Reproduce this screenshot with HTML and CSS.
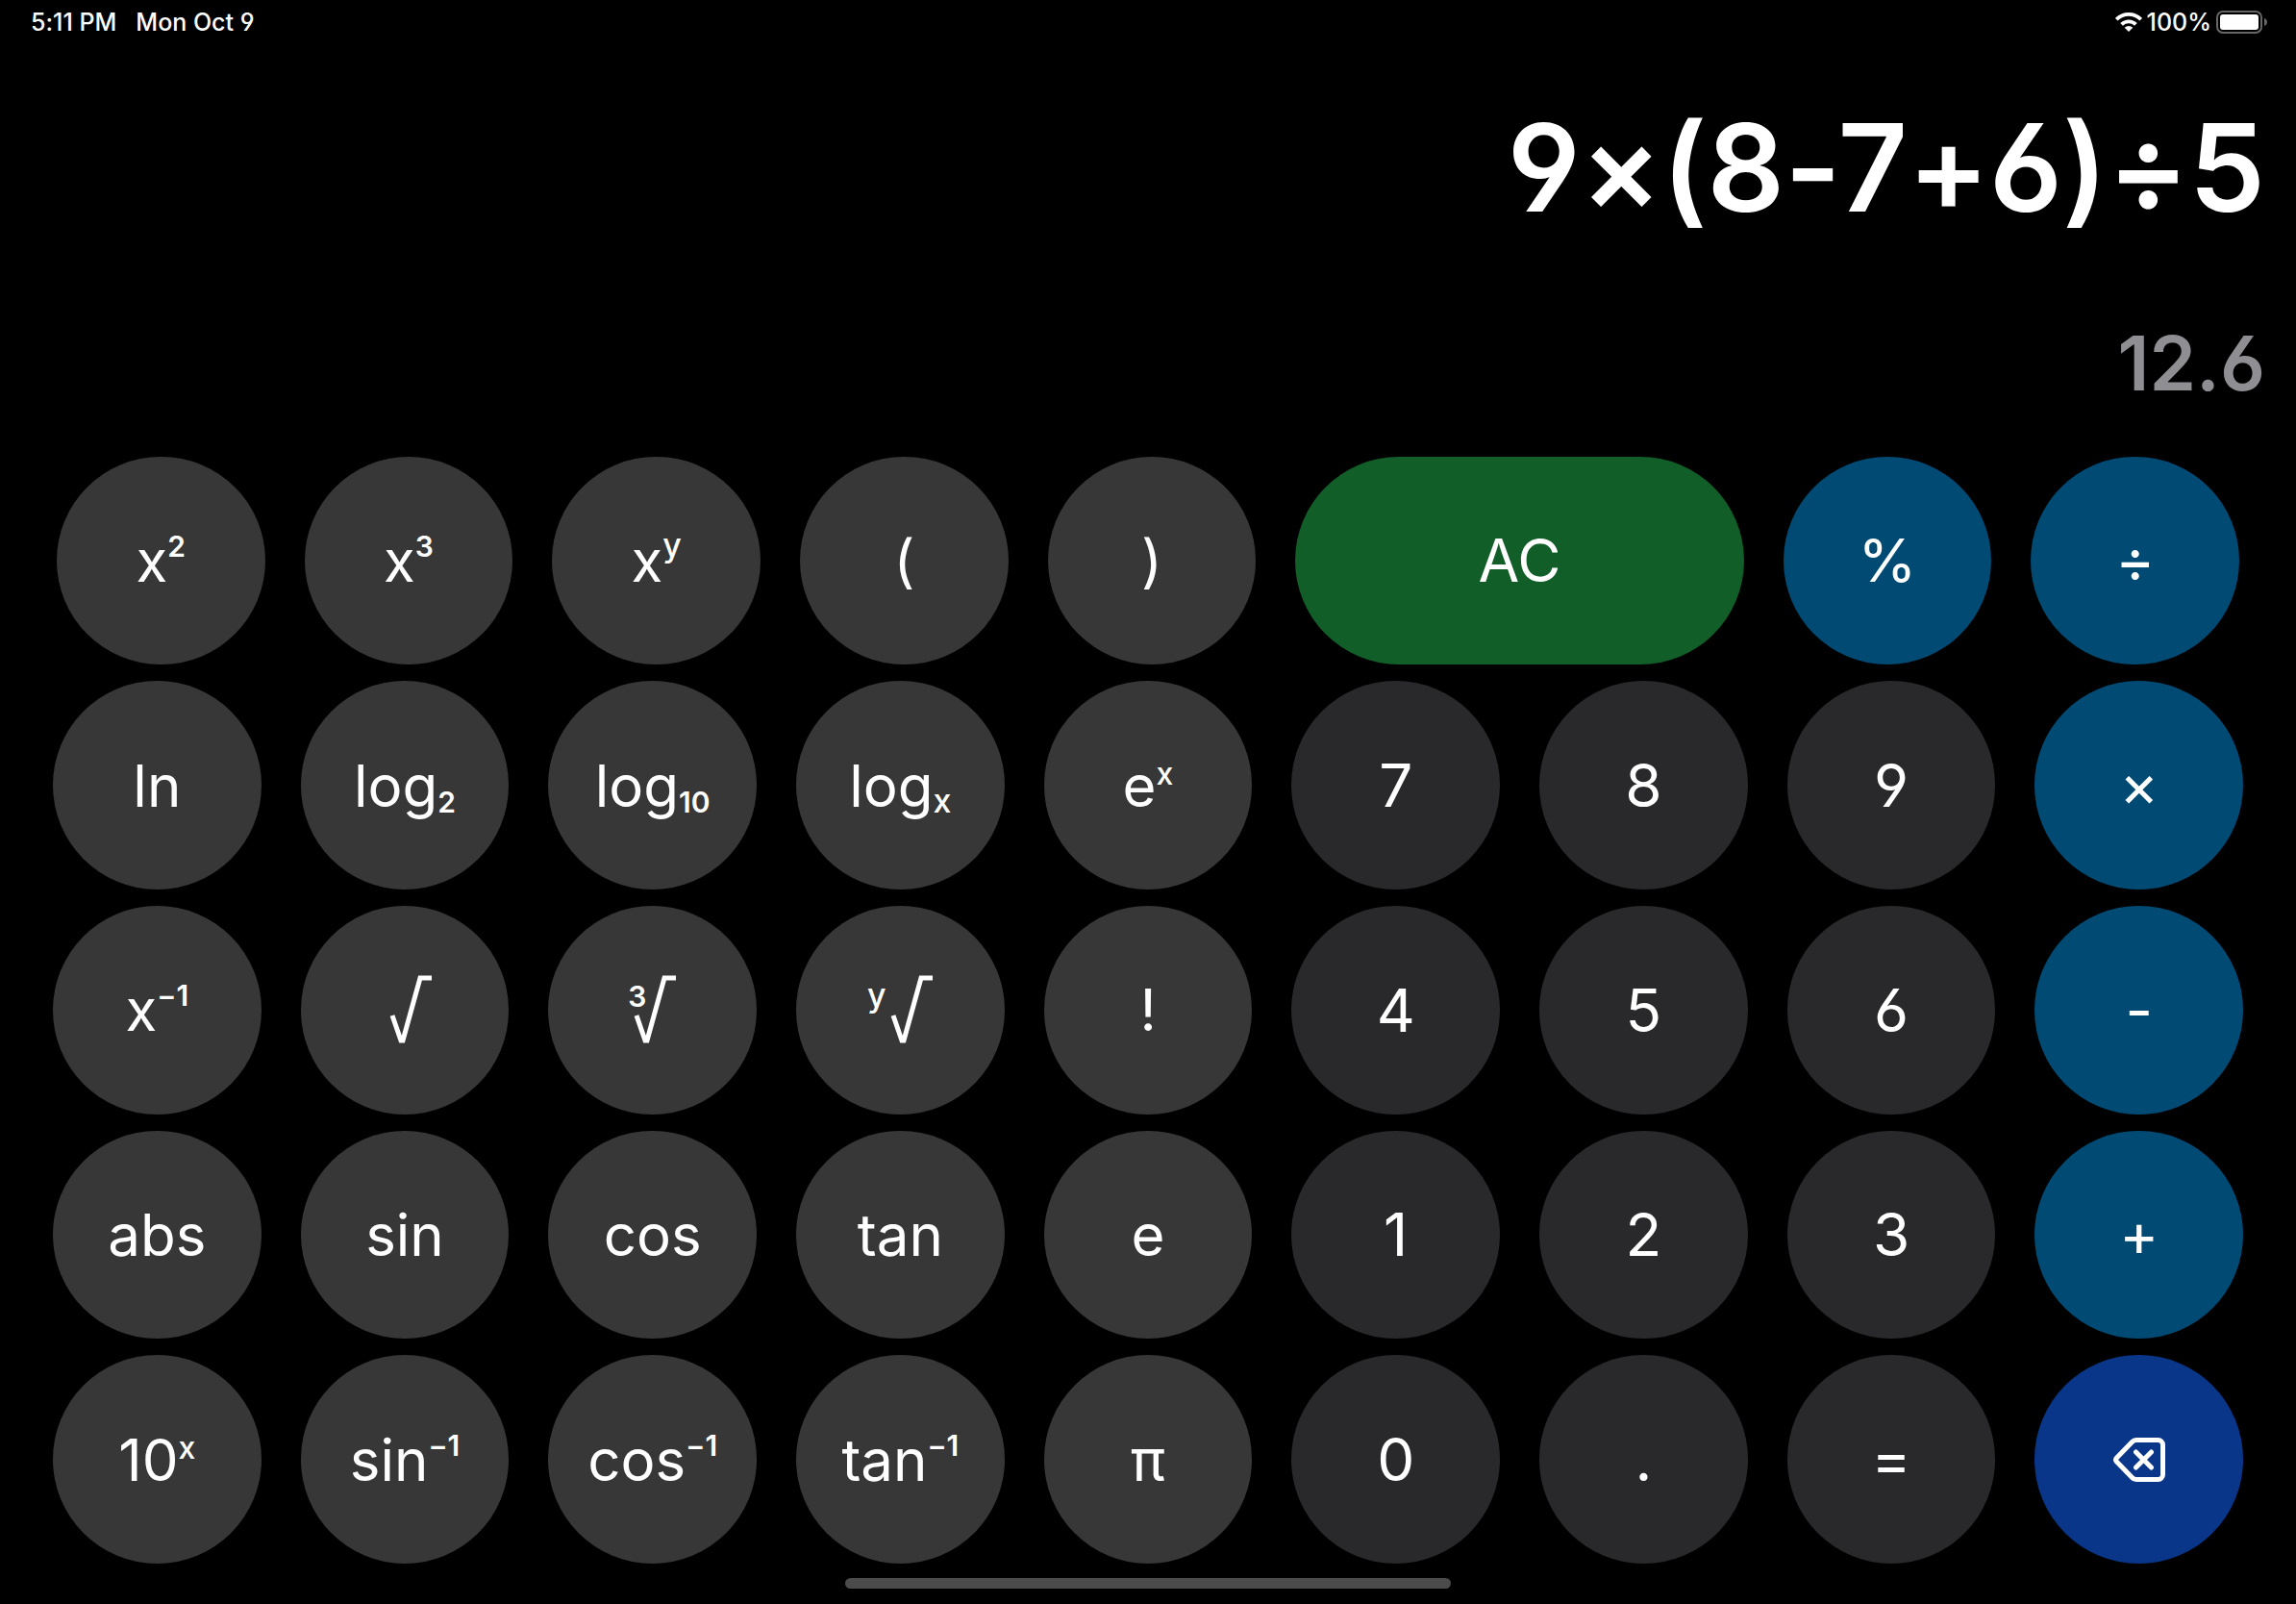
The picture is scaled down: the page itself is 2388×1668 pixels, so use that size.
FILE: index.html
```html
<!DOCTYPE html>
<html lang="en">
<head>
<meta charset="utf-8">
<meta name="viewport" content="width=device-width, initial-scale=1">
<title>Calculator</title>
<link rel="stylesheet" href="styles.css">
</head>
<body>
<div class="app">
  <header class="status">
    <div class="status-group status-left">
      <time>5:11 PM</time>
      <time>Mon Oct 9</time>
    </div>
    <div class="status-group status-right">
      <svg class="wifi" viewBox="0 0 28 20" aria-hidden="true">
        <path fill="#fff" d="M14 20l4.300-4.300a6.200 6.200 0 0 0-8.600 0z"/>
        <path fill="none" stroke="#fff" stroke-width="3.800" d="M6.600 12.400a10.600 10.600 0 0 1 14.800 0M1.300 7.200a18 18 0 0 1 25.400 0"/>
      </svg>
      <span>100%</span>
      <svg class="battery" viewBox="0 0 54 24" aria-hidden="true">
        <rect x="1" y="1" width="46" height="22" rx="6" fill="none" stroke="#666" stroke-width="2"/>
        <rect x="4" y="4" width="40" height="16" rx="3" fill="#fff"/>
        <path fill="#666" d="M50 8c2 .6 3 2.200 3 4s-1 3.400-3 4z"/>
      </svg>
    </div>
  </header>

  <section class="display">
    <output class="expression">9×(8-7+6)÷5</output>
    <output class="result">12.6</output>
  </section>

  <main class="keypad">
    <div class="row row-top">
      <button class="key">x<sup>2</sup></button>
      <button class="key">x<sup>3</sup></button>
      <button class="key">x<sup class="variable">y</sup></button>
      <button class="key">(</button>
      <button class="key">)</button>
      <button class="key clear">AC</button>
      <button class="key operator">%</button>
      <button class="key operator">÷</button>
    </div>
    <div class="row">
      <button class="key">ln</button>
      <button class="key">log<sub>2</sub></button>
      <button class="key">log<sub>10</sub></button>
      <button class="key">log<sub class="variable">x</sub></button>
      <button class="key">e<sup class="exponent">x</sup></button>
      <button class="key digit">7</button>
      <button class="key digit">8</button>
      <button class="key digit">9</button>
      <button class="key operator">×</button>
    </div>
    <div class="row">
      <button class="key">x<sup>−1</sup></button>
      <button class="key" aria-label="Square root"><svg class="radical" viewBox="0 0 46 72" aria-hidden="true"><path d="M4 43L13 69H15L33 4H45"/></svg></button>
      <button class="key" aria-label="Cube root"><sup>3</sup><svg class="radical radical-tucked" viewBox="0 0 46 72" aria-hidden="true"><path d="M4 43L13 69H15L33 4H45"/></svg></button>
      <button class="key" aria-label="y-th root"><sup class="variable">y</sup><svg class="radical radical-beside" viewBox="0 0 46 72" aria-hidden="true"><path d="M4 43L13 69H15L33 4H45"/></svg></button>
      <button class="key">!</button>
      <button class="key digit">4</button>
      <button class="key digit">5</button>
      <button class="key digit">6</button>
      <button class="key operator">-</button>
    </div>
    <div class="row">
      <button class="key">abs</button>
      <button class="key">sin</button>
      <button class="key">cos</button>
      <button class="key">tan</button>
      <button class="key">e</button>
      <button class="key digit">1</button>
      <button class="key digit">2</button>
      <button class="key digit">3</button>
      <button class="key operator">+</button>
    </div>
    <div class="row">
      <button class="key">10<sup class="exponent">x</sup></button>
      <button class="key">sin<sup>−1</sup></button>
      <button class="key">cos<sup>−1</sup></button>
      <button class="key">tan<sup>−1</sup></button>
      <button class="key">π</button>
      <button class="key digit">0</button>
      <button class="key digit">.</button>
      <button class="key digit">=</button>
      <button class="key delete" aria-label="Delete">
        <svg class="delete-icon" viewBox="0 0 54 46" aria-hidden="true">
          <path d="M24 2.500H46.500a5 5 0 0 1 5 5V38.500a5 5 0 0 1-5 5H24a6 6 0 0 1-4.500-2L3.500 25a3 3 0 0 1 0-4L19.500 4.500a6 6 0 0 1 4.500-2zM23.500 15L39.500 31M39.500 15L23.500 31"/>
        </svg>
      </button>
    </div>
  </main>

  <div class="home-indicator"></div>
</div>
</body>
</html>
```

FILE: styles.css
```css
* {
  box-sizing: border-box;
}

body {
  margin: 0;
  background: #000;
  color: #fff;
  font-family: Inter, "Liberation Sans", sans-serif;
  font-feature-settings: "calt" 0, "cv03" 1, "cv04" 1;
}

.app {
  display: flex;
  flex-direction: column;
  min-height: 100vh;
  padding-bottom: 16px;
}

.status {
  display: flex;
  justify-content: space-between;
  height: 46px;
  padding: 0 29px 0 32px;
  font-size: 25px;
  font-weight: 500;
}

.status-group {
  display: flex;
  align-items: center;
}

.status-left {
  gap: 20px;
}

.status-right {
  gap: 5px;
}

.wifi {
  width: 28px;
  height: 20px;
}

.battery {
  width: 54px;
  height: 24px;
}

.display {
  display: flex;
  flex: 1;
  flex-direction: column;
  align-items: flex-end;
  justify-content: flex-end;
  gap: 76px;
  padding: 0 32px 49px;
  font-weight: 600;
}

.expression {
  font-size: 126px;
  line-height: 160px;
}

.result {
  color: #8e8e93;
  font-size: 78px;
  line-height: 96px;
}

.keypad {
  display: flex;
  flex-direction: column;
  gap: 17px;
}

.row {
  display: flex;
  gap: 41px;
  padding: 0 55px;
}

.row-top {
  padding: 0 59px;
}

.key {
  flex: 217 1 0;
  aspect-ratio: 1;
  min-width: 0;
  padding: 0;
  border: 0;
  border-radius: 999px;
  background: #373737;
  color: inherit;
  font: inherit;
  font-feature-settings: inherit;
  font-size: 60px;
}

.key sup,
.key sub {
  font-size: 30px;
  font-weight: 600;
  line-height: 0;
}

.key sup {
  vertical-align: 26px;
}

.key sub {
  vertical-align: -6px;
}

.key .variable {
  font-size: 34px;
  font-weight: 500;
}

.key .exponent {
  font-size: 32px;
  font-weight: 500;
  vertical-align: 23px;
}

.radical {
  width: 46px;
  height: 72px;
  margin-left: 12px;
  fill: none;
  stroke: #fff;
  stroke-width: 5;
  vertical-align: -12px;
}

.radical-tucked {
  margin-left: -14px;
}

.radical-beside {
  margin-left: 3px;
}

.digit,
.operator,
.clear {
  font-size: 62px;
}

.digit {
  background: #29292b;
}

.operator {
  background: #004a74;
}

.clear {
  flex-grow: 467;
  aspect-ratio: auto;
  background: #125e28;
}

.delete {
  background: #093688;
}

.delete-icon {
  display: block;
  width: 54px;
  height: 46px;
  margin: 0 auto;
  fill: none;
  stroke: #fff;
  stroke-width: 5;
  stroke-linecap: round;
  stroke-linejoin: round;
}

.home-indicator {
  align-self: center;
  width: 630px;
  max-width: 60%;
  height: 11px;
  margin-top: 15px;
  border-radius: 6px;
  background: #4b4b4b;
}
```
